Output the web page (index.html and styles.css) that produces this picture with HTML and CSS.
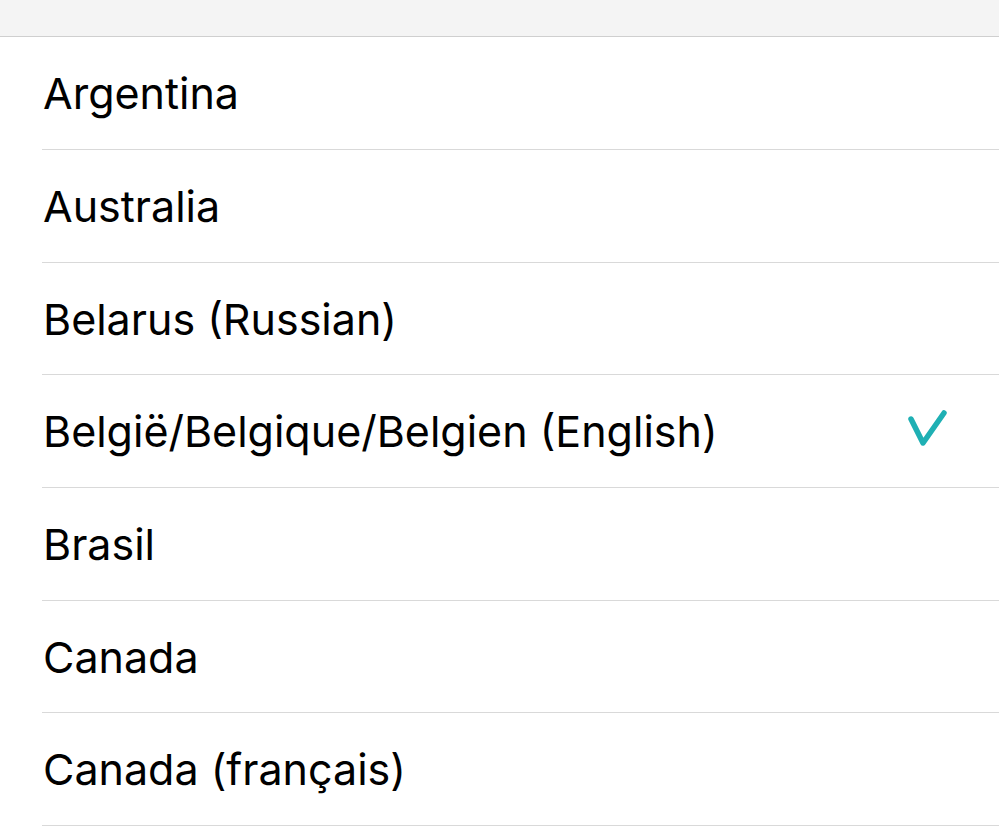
FILE: index.html
```html
<!DOCTYPE html>
<html>
<head>
  <meta charset="UTF-8">
  <title>Region</title>
  <link rel="stylesheet" href="styles.css">
</head>
<body>
  <div class="topbar"></div>
  <ul class="list">
    <li class="row"><span class="label">Argentina</span></li>
    <li class="row"><span class="label">Australia</span></li>
    <li class="row"><span class="label">Belarus (Russian)</span></li>
    <li class="row selected">
      <span class="label">België/Belgique/Belgien (English)</span>
      <svg class="check" width="40" height="40" viewBox="0 0 40 40">
        <path d="M4 9 L16 33 L37 3" fill="none" stroke="#1fb0b4" stroke-width="5.5" stroke-linecap="round" stroke-linejoin="round"/>
      </svg>
    </li>
    <li class="row"><span class="label">Brasil</span></li>
    <li class="row"><span class="label">Canada</span></li>
    <li class="row"><span class="label">Canada (français)</span></li>
  </ul>
</body>
</html>
```

FILE: styles.css
```css
body { margin: 0; background: #fff; font-family: Inter, "Noto Sans", sans-serif; overflow: hidden; }
.topbar { height: 36.4px; background: #f4f4f4; border-bottom: 1px solid #cfcfcf; }
.list { list-style: none; margin: 0; padding: 0 0 0 42px; }
.row { display: flex; align-items: center; justify-content: space-between; height: 111.67px; border-bottom: 1px solid #d9d9d9; padding-right: 52px; }
.label { font-size: 43px; color: #000; padding-left: 1px; }
.check { display: block; margin-top: -2px; }
```
